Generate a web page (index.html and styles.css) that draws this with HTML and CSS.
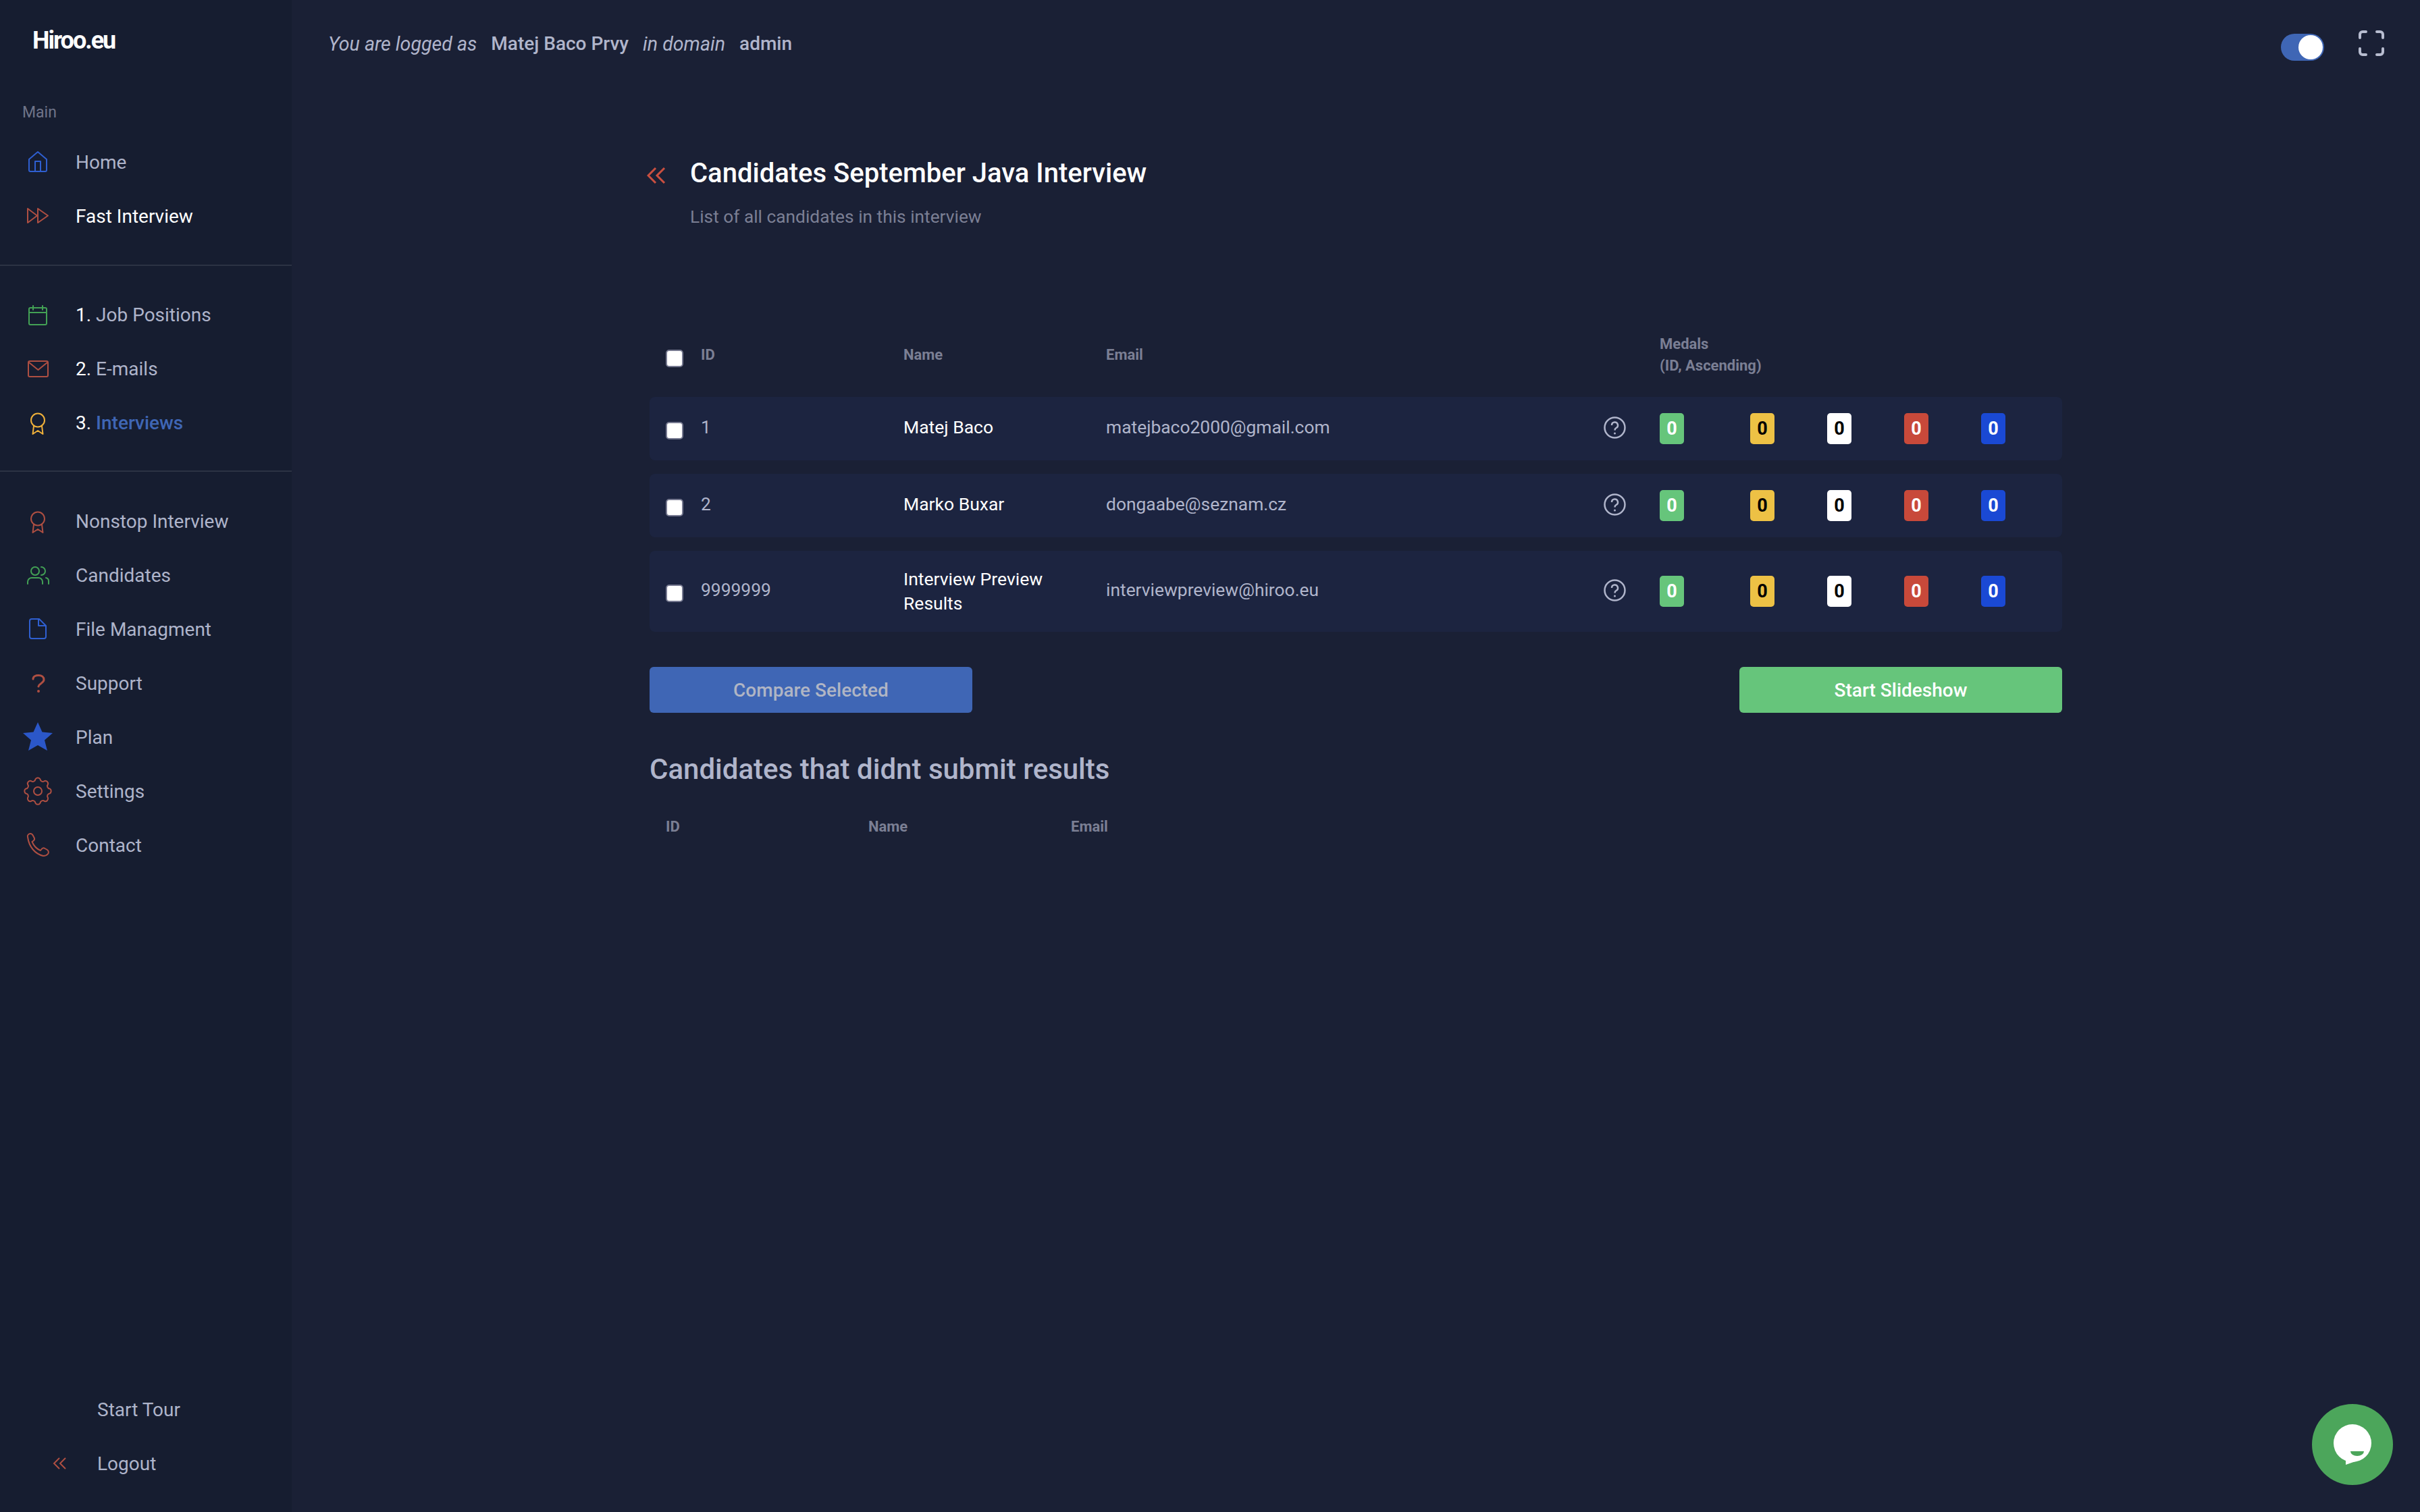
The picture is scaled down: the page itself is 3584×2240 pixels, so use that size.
FILE: index.html
```html
<!DOCTYPE html>
<html lang="en">
<head>
  <meta charset="UTF-8">
  <title>Hiroo.eu</title>
  <link rel="stylesheet" href="styles.css">
</head>
<body>
  <aside class="sidebar">
    <div class="logo">Hiroo.eu</div>
    <div class="nav-label">Main</div>
    <nav class="nav-first">
      <a class="nav-item"><svg class="nav-icon icon-blue" viewBox="0 0 48 48"><path d="M11 20L24 9l13 11v16a2 2 0 0 1-2 2H13a2 2 0 0 1-2-2z"/><path d="M20 38V23h8v15"/></svg>Home</a>
      <a class="nav-item active"><svg class="nav-icon icon-red" viewBox="0 0 48 48"><path d="M9 13l14 10.500L9 34z"/><path d="M24 13l15 10.500L24 34z"/></svg>Fast Interview</a>
    </nav>
    <div class="divider divider-first"></div>
    <nav>
      <a class="nav-item"><svg class="nav-icon icon-green" viewBox="0 0 48 48"><rect x="11" y="14" width="26" height="25" rx="2"/><path d="M11 21h26M17 11v6M31 11v6"/></svg><span class="step">1.</span>&nbsp;Job Positions</a>
      <a class="nav-item"><svg class="nav-icon icon-red" viewBox="0 0 48 48"><rect x="10" y="13" width="29" height="23" rx="2"/><path d="M11 15l13.500 11L38 15"/></svg><span class="step">2.</span>&nbsp;E-mails</a>
      <a class="nav-item"><svg class="nav-icon icon-yellow" viewBox="0 0 48 48"><circle cx="24" cy="20.500" r="10"/><path d="M18 29l-1.500 12 7.500-5 7.500 5L30 29"/></svg><span class="step">3.</span>&nbsp;<span class="current">Interviews</span></a>
    </nav>
    <div class="divider divider-second"></div>
    <nav>
      <a class="nav-item"><svg class="nav-icon icon-red" viewBox="0 0 48 48"><circle cx="24" cy="20.500" r="10"/><path d="M18 29l-1.500 12 7.500-5 7.500 5L30 29"/></svg>Nonstop Interview</a>
      <a class="nav-item"><svg class="nav-icon icon-green" viewBox="0 0 48 48"><circle cx="20" cy="18" r="6"/><path d="M29 12a6 6 0 0 1 0 12M9 37v-3a6 6 0 0 1 6-6h10a6 6 0 0 1 6 6v3M36 28a5 5 0 0 1 4 5v4"/></svg>Candidates</a>
      <a class="nav-item"><svg class="nav-icon icon-blue" viewBox="0 0 48 48"><path d="M15 9h11l10 10v16a3 3 0 0 1-3 3H15a3 3 0 0 1-3-3V12a3 3 0 0 1 3-3z"/><path d="M25 10v9h10"/></svg>File Managment</a>
      <a class="nav-item"><svg class="nav-icon icon-red icon-thick" viewBox="0 0 48 48"><path d="M17 18c0-4 4-5.500 8-5.500 5 0 8 2.500 8 6.500 0 5-7 5-8 10"/><circle class="dot" cx="25" cy="36" r="2"/></svg>Support</a>
      <a class="nav-item"><svg class="nav-icon" viewBox="0 0 48 48"><polygon class="star" points="24,2 30.500,16.500 46,18 34,28.500 38,44 24,36 10,44 14,28.500 2,18 17.500,16.500"/></svg>Plan</a>
      <a class="nav-item"><svg class="nav-icon icon-red" viewBox="0 0 48 48"><path d="M20.490 6.350A4 4 0 0 1 27.510 6.350A4 4 0 0 0 34 9.030A4 4 0 0 1 38.970 14A4 4 0 0 0 41.650 20.490A4 4 0 0 1 41.650 27.510A4 4 0 0 0 38.970 34A4 4 0 0 1 34 38.970A4 4 0 0 0 27.510 41.650A4 4 0 0 1 20.490 41.650A4 4 0 0 0 14 38.970A4 4 0 0 1 9.030 34A4 4 0 0 0 6.350 27.510A4 4 0 0 1 6.350 20.490A4 4 0 0 0 9.030 14A4 4 0 0 1 14 9.030A4 4 0 0 0 20.490 6.350z"/><circle cx="24" cy="24" r="6"/></svg>Settings</a>
      <a class="nav-item"><svg class="nav-icon icon-red" viewBox="0 0 48 48"><path d="M9 12c-1-3 2-5 4-5s3 1 4 3l2 4c.500 2-.500 3-2 4l-1.500 1c2.500 6 7.500 11 12.500 13l2-2.500c1-1 3-1.500 4.500-.500l3.500 2c2 1.500 2.500 4 1 6-1.500 2-4 3-7 3C20 37 11 27 9 12z"/></svg>Contact</a>
    </nav>
    <div class="sidebar-bottom">
      <a class="bottom-item">Start Tour</a>
      <a class="bottom-item"><svg class="logout-icon" viewBox="0 0 20 18"><path d="M10 1L2 9l8 8M19 1l-8 8 8 8"/></svg>Logout</a>
    </div>
  </aside>

  <div class="main">
    <header class="topbar">
      <div class="logged">
        <i>You are logged as</i><b>Matej Baco Prvy</b><i>in domain</i><b>admin</b>
      </div>
      <div class="topbar-right">
        <div class="toggle"><span class="knob"></span></div>
        <svg class="fullscreen" viewBox="0 0 40 40"><path d="M3 12V7a4 4 0 0 1 4-4h5M28 3h5a4 4 0 0 1 4 4v5M37 28v5a4 4 0 0 1-4 4h-5M12 37H7a4 4 0 0 1-4-4v-5"/></svg>
      </div>
    </header>

    <div class="content">
      <div class="page-head">
        <svg class="back" viewBox="0 0 28 24"><path d="M13 1L2 12l11 11M26 1L15 12l11 11"/></svg>
        <div>
          <h1>Candidates September Java Interview</h1>
          <p>List of all candidates in this interview</p>
        </div>
      </div>

      <div class="table-head row-grid">
        <input type="checkbox" class="check">
        <span>ID</span>
        <span>Name</span>
        <span>Email</span>
        <span></span>
        <span class="medals-head">Medals<br>(ID, Ascending)</span>
      </div>

      <div class="row row-grid">
        <input type="checkbox" class="check">
        <span class="cell">1</span>
        <span class="cell name">Matej Baco</span>
        <span class="cell">matejbaco2000@gmail.com</span>
        <svg class="cell help" viewBox="0 0 33 33"><circle cx="16.500" cy="16.500" r="15"/><path d="M12 13a4.500 4.500 0 1 1 6.500 4c-1.500.800-2 1.500-2 3.500"/><circle class="dot" cx="16.500" cy="25" r="1.500"/></svg>
        <span class="medal green">0</span>
        <span class="medal yellow">0</span>
        <span class="medal white">0</span>
        <span class="medal red">0</span>
        <span class="medal blue">0</span>
      </div>

      <div class="row row-grid">
        <input type="checkbox" class="check">
        <span class="cell">2</span>
        <span class="cell name">Marko Buxar</span>
        <span class="cell">dongaabe@seznam.cz</span>
        <svg class="cell help" viewBox="0 0 33 33"><circle cx="16.500" cy="16.500" r="15"/><path d="M12 13a4.500 4.500 0 1 1 6.500 4c-1.500.800-2 1.500-2 3.500"/><circle class="dot" cx="16.500" cy="25" r="1.500"/></svg>
        <span class="medal green">0</span>
        <span class="medal yellow">0</span>
        <span class="medal white">0</span>
        <span class="medal red">0</span>
        <span class="medal blue">0</span>
      </div>

      <div class="row row-grid">
        <input type="checkbox" class="check">
        <span class="cell">9999999</span>
        <span class="name">Interview Preview Results</span>
        <span class="cell">interviewpreview@hiroo.eu</span>
        <svg class="cell help" viewBox="0 0 33 33"><circle cx="16.500" cy="16.500" r="15"/><path d="M12 13a4.500 4.500 0 1 1 6.500 4c-1.500.800-2 1.500-2 3.500"/><circle class="dot" cx="16.500" cy="25" r="1.500"/></svg>
        <span class="medal green">0</span>
        <span class="medal yellow">0</span>
        <span class="medal white">0</span>
        <span class="medal red">0</span>
        <span class="medal blue">0</span>
      </div>

      <div class="actions">
        <button class="btn btn-compare">Compare Selected</button>
        <button class="btn btn-start">Start Slideshow</button>
      </div>

      <h2>Candidates that didnt submit results</h2>
      <div class="missing-head">
        <span>ID</span>
        <span>Name</span>
        <span>Email</span>
      </div>
    </div>
  </div>

  <div class="chat">
    <svg viewBox="0 0 60 60"><circle class="bubble" cx="30" cy="28" r="28"/><path class="bubble" d="M20 60v-8h23z"/><path class="smile" d="M27 40h20a10 7 0 0 1-20 0z"/></svg>
  </div>
</body>
</html>
```

FILE: styles.css
```css
* {
  margin: 0;
  padding: 0;
  box-sizing: border-box;
}
body {
  display: flex;
  width: 3584px;
  height: 2240px;
  overflow: hidden;
  background: #1a2035;
  color: #b0b5cb;
  font-family: Roboto, sans-serif;
  font-size: 28px;
}

/* Sidebar */
.sidebar {
  display: flex;
  flex-direction: column;
  flex: 0 0 432px;
  background: #161d30;
}
.logo {
  margin: 37px 0 0 48px;
  color: #fff;
  font-size: 36px;
  font-weight: 700;
  line-height: 46px;
  letter-spacing: -2px;
}
.nav-label {
  margin: 69px 0 18px 33px;
  color: #6f7489;
  font-size: 23px;
  line-height: 30px;
}
.nav-item {
  display: flex;
  align-items: center;
  height: 80px;
  padding-left: 32px;
  color: #aeb4ca;
}
.nav-item.active,
.step {
  color: #fff;
}
.current {
  color: #3f66b5;
  font-weight: 500;
}
.nav-icon {
  flex: none;
  width: 48px;
  height: 48px;
  margin-right: 32px;
  fill: none;
  stroke-width: 2;
  stroke-linejoin: round;
  stroke-linecap: round;
}
.icon-blue { stroke: #2f5fd0; }
.icon-red { stroke: #ae4f42; }
.icon-green { stroke: #43a155; }
.icon-yellow { stroke: #f0b13a; }
.icon-thick { stroke-width: 3; }
.dot { fill: #ae4f42; stroke: none; }
.star { fill: #2b57c9; }
.divider {
  height: 2px;
  background: #2c3344;
}
.divider-first {
  margin: 32px 0;
}
.divider-second {
  margin: 31px 0 33px;
}
.sidebar-bottom {
  margin-top: auto;
  padding-bottom: 32px;
}
.bottom-item {
  display: flex;
  align-items: center;
  height: 80px;
  padding-left: 144px;
  position: relative;
  color: #aeb4ca;
}
.logout-icon {
  position: absolute;
  left: 78px;
  width: 20px;
  height: 18px;
  fill: none;
  stroke: #ae4f42;
  stroke-width: 2;
}

/* Top bar */
.main {
  flex: 1;
  min-width: 0;
}
.topbar {
  display: flex;
  justify-content: space-between;
  align-items: center;
  height: 130px;
  padding: 0 52px 0 54px;
}
.logged {
  display: flex;
  gap: 21px;
}
.logged i {
  font-size: 28.600px;
  font-weight: 400;
}
.logged b {
  font-weight: 500;
}
.topbar-right {
  display: flex;
  align-items: center;
  gap: 50px;
}
.toggle {
  display: flex;
  justify-content: flex-end;
  align-items: center;
  width: 64px;
  height: 40px;
  margin-top: 10px;
  padding-right: 2px;
  border-radius: 20px;
  background: #3f66b5;
}
.knob {
  width: 36px;
  height: 36px;
  border-radius: 50%;
  background: #fff;
}
.fullscreen {
  width: 40px;
  height: 40px;
  margin-bottom: 2px;
  fill: none;
  stroke: #b8bdd0;
  stroke-width: 4;
  stroke-linecap: round;
}

/* Content */
.content {
  width: 2092px;
  margin: 0 auto;
}
.page-head {
  display: flex;
  margin-top: 103px;
}
.back {
  flex: none;
  width: 28px;
  height: 24px;
  margin: 15px 36px 0 -4px;
  fill: none;
  stroke: #c94f40;
  stroke-width: 3;
}
h1 {
  color: #fff;
  font-size: 40px;
  font-weight: 500;
  line-height: 48px;
}
.page-head p {
  margin-top: 22px;
  color: #7b7f94;
  font-size: 26.300px;
  line-height: 36px;
}
.row-grid {
  display: grid;
  grid-template-columns: 52px 300px 300px 737px 83px 134px 114px 114px 114px 1fr;
  align-items: center;
  padding-left: 24px;
}
.table-head {
  margin-top: 155px;
  padding-bottom: 30px;
  color: #7b7f94;
  font-size: 22px;
  font-weight: 700;
  line-height: 32px;
}
.medals-head {
  grid-column: 6 / -1;
}
.check {
  appearance: none;
  width: 26px;
  height: 26px;
  margin: 5px 0 0;
  border: 2px solid #767990;
  border-radius: 5px;
  background: #fff;
}
.table-head .check {
  margin-top: 10px;
}
.row {
  margin-bottom: 20px;
  padding-top: 24px;
  padding-bottom: 24px;
  border-radius: 8px;
  background: #1c2440;
  font-size: 26.400px;
  line-height: 36px;
}
.cell {
  margin-bottom: 4px;
}
.name {
  max-width: 250px;
  color: #fff;
  font-size: 26.500px;
}
.help {
  width: 33px;
  height: 33px;
  fill: none;
  stroke: #b0b5cb;
  stroke-width: 2.500;
}
.help .dot {
  fill: #b0b5cb;
}
.medal {
  width: 36px;
  height: 46px;
  border-radius: 5px;
  font-size: 27px;
  font-weight: 700;
  line-height: 46px;
  text-align: center;
}
.green { background: #66c57b; color: #fff; }
.yellow { background: #edc145; color: #000; }
.white { background: #fff; color: #000; }
.red { background: #c8493a; color: #fff; }
.blue { background: #1a49d4; color: #fff; }

.actions {
  display: flex;
  justify-content: space-between;
  margin-top: 52px;
}
.btn {
  width: 478px;
  height: 68px;
  border: none;
  border-radius: 6px;
  font-family: Roboto, sans-serif;
  font-size: 28px;
  font-weight: 500;
}
.btn-compare {
  background: #3f66b5;
  color: #b0b5c4;
}
.btn-start {
  background: #66c57b;
  color: #fff;
}
h2 {
  margin-top: 60px;
  color: #b0b5cb;
  font-size: 42px;
  font-weight: 500;
  line-height: 48px;
}
.missing-head {
  display: grid;
  grid-template-columns: 300px 300px 1fr;
  margin-top: 45px;
  padding-left: 24px;
  color: #7b7f94;
  font-size: 22px;
  font-weight: 700;
  line-height: 32px;
}

/* Chat button */
.chat {
  position: fixed;
  right: 40px;
  bottom: 40px;
  display: flex;
  justify-content: center;
  align-items: center;
  width: 120px;
  height: 120px;
  border-radius: 50%;
  background: #4ca65b;
}
.chat svg {
  width: 60px;
  height: 60px;
  overflow: visible;
}
.bubble {
  fill: #fff;
}
.smile {
  fill: #4ca65b;
}
```
